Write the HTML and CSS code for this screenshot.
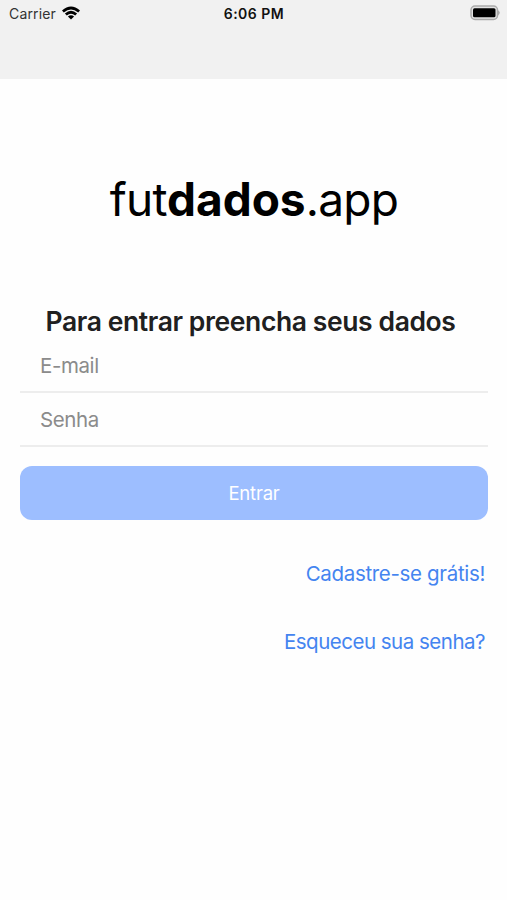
FILE: index.html
```html
<!DOCTYPE html>
<html lang="pt-BR">
<head>
  <meta charset="UTF-8">
  <meta name="viewport" content="width=device-width, initial-scale=1.0">
  <title>futdados.app</title>
  <link rel="stylesheet" href="styles.css">
</head>

<body>
  <header class="header">
    <div class="status-bar">
      <div class="network">
        <span class="carrier">Carrier</span>
        <svg class="wifi" viewBox="0 0 18 14" width="18" height="14">
          <path d="M0 4.4 Q9 -3.4 18 4.4 L16.2 6.4 Q9 0.6 1.8 6.4 Z"/>
          <path d="M2.9 7.4 Q9 2.2 15.1 7.4 L13.2 9.4 Q9 6 4.8 9.4 Z"/>
          <path d="M5.9 10.4 Q9 7.9 12.1 10.4 L9 13.6 Z"/>
        </svg>
      </div>
      <span class="time">6:06 PM</span>
      <svg class="battery" viewBox="0 0 31 16" width="31" height="16">
        <rect class="battery-case" x="1" y="1" width="26.5" height="13.5" rx="4"/>
        <rect x="3" y="3.2" width="22.5" height="9" rx="1.5"/>
        <path class="battery-tip" d="M28 5.2 Q31.6 7.8 28 10.4 Z"/>
      </svg>
    </div>
  </header>

  <main class="login">
    <h1 class="logo">fut<strong>dados</strong>.app</h1>

    <form class="form">
      <h2 class="title">Para entrar preencha seus dados</h2>
      <input class="field" type="email" placeholder="E-mail">
      <input class="field" type="password" placeholder="Senha">
      <button class="submit" type="button">Entrar</button>
    </form>

    <nav class="links">
      <a class="link signup" href="#">Cadastre-se grátis!</a>
      <a class="link forgot" href="#">Esqueceu sua senha?</a>
    </nav>
  </main>
</body>
</html>
```
FILE: styles.css
```css
* {
  box-sizing: border-box;
}

body {
  margin: 0;
  min-height: 100vh;
  background: #fefefe;
  font-family: Inter, "Liberation Sans", sans-serif;
}

.header {
  height: 79px;
  background: #f1f1f1;
}

.status-bar {
  display: grid;
  grid-template-columns: 1fr auto 1fr;
  align-items: center;
  height: 27px;
  padding: 0 6px 0 9px;
  color: #111;
}

.network {
  display: flex;
  align-items: center;
  gap: 6px;
}

.carrier {
  font-size: 14px;
  letter-spacing: 0.15px;
  color: #333;
}

.wifi {
  margin-top: -2px;
}

.time {
  margin-right: 2px;
  font-size: 14px;
  font-weight: 600;
  letter-spacing: 0.5px;
}

.battery {
  justify-self: end;
  margin-top: -1px;
}

.battery-case {
  fill: #e2e2e2;
  stroke: #aaa;
  stroke-width: 1.5;
}

.battery-tip {
  fill: #aaa;
}

.login {
  display: flex;
  flex-direction: column;
  padding: 90px 19px 0 20px;
}

.logo {
  margin: 0;
  text-align: center;
  font-size: 46px;
  font-weight: 400;
  line-height: 60px;
  letter-spacing: -0.7px;
  color: #000;
}

.logo strong {
  font-weight: 700;
  letter-spacing: 0;
}

.form {
  display: flex;
  flex-direction: column;
  margin-top: 76px;
}

.title {
  margin: 0;
  padding-right: 7px;
  text-align: center;
  white-space: nowrap;
  font-size: 26.5px;
  font-weight: 600;
  line-height: 32px;
  letter-spacing: -0.4px;
  color: #202020;
}

.field {
  height: 54px;
  padding: 0 20px;
  border: none;
  border-bottom: 2px solid #ededed;
  background: none;
  font-family: inherit;
  font-size: 20.5px;
  letter-spacing: -0.4px;
  outline: none;
}

.title + .field {
  margin-top: 2px;
}

.field::placeholder {
  color: #8b8b8b;
  opacity: 1;
}

.submit {
  height: 54px;
  margin-top: 19px;
  border: none;
  border-radius: 12px;
  background: #9dbeff;
  color: #fff;
  font-family: inherit;
  font-size: 18.5px;
  letter-spacing: -0.2px;
}

.links {
  display: flex;
  flex-direction: column;
  align-items: flex-end;
  gap: 40px;
  margin-top: 40px;
  padding-right: 3px;
}

.link {
  font-size: 20.5px;
  line-height: 28px;
  letter-spacing: -0.4px;
  color: #4484f0;
  text-decoration: none;
}

.signup {
  letter-spacing: -0.33px;
}

.forgot {
  letter-spacing: -0.5px;
}
```
